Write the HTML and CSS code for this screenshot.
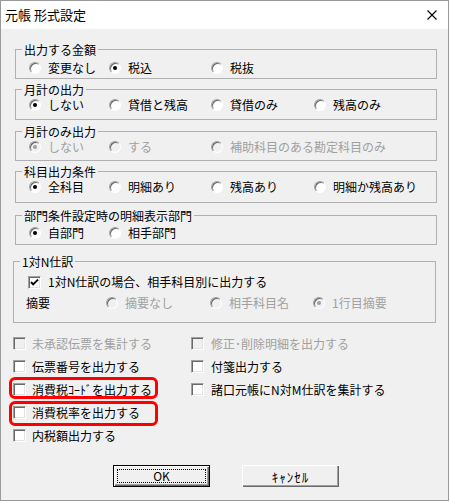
FILE: index.html
```html
<!DOCTYPE html>
<html lang="ja">
<head>
<meta charset="UTF-8">
<link rel="stylesheet" href="styles.css">
</head>
<body>
<div class="window">
	<div class="titlebar">
		<span class="title">元帳 形式設定</span>
		<svg class="close" width="10" height="10" viewBox="0 0 10 10"><path d="M0.5 0.5 L9.5 9.5 M9.5 0.5 L0.5 9.5" stroke="#000" stroke-width="1.1" fill="none"/></svg>
	</div>
	<div class="content">
		<fieldset class="group g1">
			<legend>出力する金額</legend>
			<div class="opts">
				<label class="opt"><span class="radio"></span>変更なし</label>
				<label class="opt"><span class="radio on"></span>税込</label>
				<label class="opt"><span class="radio"></span>税抜</label>
			</div>
		</fieldset>
		<fieldset class="group g2">
			<legend>月計の出力</legend>
			<div class="opts">
				<label class="opt"><span class="radio on"></span>しない</label>
				<label class="opt"><span class="radio"></span>貸借と残高</label>
				<label class="opt"><span class="radio"></span>貸借のみ</label>
				<label class="opt"><span class="radio"></span>残高のみ</label>
			</div>
		</fieldset>
		<fieldset class="group g3">
			<legend>月計のみ出力</legend>
			<div class="opts">
				<label class="opt off"><span class="radio on"></span>しない</label>
				<label class="opt off"><span class="radio"></span>する</label>
				<label class="opt off wide"><span class="radio"></span>補助科目のある勘定科目のみ</label>
			</div>
		</fieldset>
		<fieldset class="group g4">
			<legend>科目出力条件</legend>
			<div class="opts">
				<label class="opt"><span class="radio on"></span>全科目</label>
				<label class="opt"><span class="radio"></span>明細あり</label>
				<label class="opt"><span class="radio"></span>残高あり</label>
				<label class="opt"><span class="radio"></span>明細か残高あり</label>
			</div>
		</fieldset>
		<fieldset class="group g5">
			<legend>部門条件設定時の明細表示部門</legend>
			<div class="opts">
				<label class="opt"><span class="radio on"></span>自部門</label>
				<label class="opt"><span class="radio"></span>相手部門</label>
			</div>
		</fieldset>
		<fieldset class="group g6">
			<legend>1対N仕訳</legend>
			<div class="opts">
				<label class="opt full"><span class="box ticked"><svg width="11" height="11" viewBox="0 0 11 11"><path d="M2 5 L4.2 7.4 L9 2.6" stroke="#000" stroke-width="2" fill="none"/></svg></span>1対N仕訳の場合、相手科目別に出力する</label>
			</div>
			<div class="opts second">
				<span class="opt">摘要</span>
				<label class="opt off"><span class="radio"></span>摘要なし</label>
				<label class="opt off"><span class="radio"></span>相手科目名</label>
				<label class="opt off"><span class="radio on"></span>1行目摘要</label>
			</div>
		</fieldset>

		<div class="checks">
			<label class="check off"><span class="box"></span>未承認伝票を集計する</label>
			<label class="check off"><span class="box"></span>修正･削除明細を出力する</label>
			<label class="check"><span class="box"></span>伝票番号を出力する</label>
			<label class="check"><span class="box"></span>付箋出力する</label>
			<label class="check mark mark-a"><span class="box"></span>消費税ｺｰﾄﾞを出力する</label>
			<label class="check"><span class="box"></span>諸口元帳にN対M仕訳を集計する</label>
			<label class="check mark mark-b"><span class="box"></span>消費税率を出力する</label>
			<span></span>
			<label class="check"><span class="box"></span>内税額出力する</label>
		</div>

		<div class="buttons">
			<button class="btn default"><span class="focus">OK</span></button>
			<button class="btn"><span class="cap">ｷｬﾝｾﾙ</span></button>
		</div>
	</div>
</div>
</body>
</html>
```

FILE: styles.css
```css
*{ margin:0; padding:0; box-sizing:border-box;}
body{ background:#fff; font-family:"Noto Sans CJK JP","Noto Sans",sans-serif; font-size:12px; color:#000;}

.window{ width:449px; height:501px; border:1px solid #9a9a9a; background:#f0f0f0;}
.titlebar{ height:28px; background:#fff; display:flex; align-items:center; justify-content:space-between; padding:0 11px 0 4px;}
.title{ font-size:13px; line-height:16px;}
.close{ display:block;}

.content{ padding:13px 11px 0 14px;}

/* group boxes */
.group{ border:1px solid #b0b0b0; padding:0 0 0 6px; min-width:0;}
.group legend{ padding:0 2px; line-height:15px;}
.opts{ display:grid; grid-template-columns:80px 102px 103px auto; padding-left:7px; line-height:14px;}
.opt{ display:flex; align-items:center; gap:7px; white-space:nowrap;}
.opt.full{ grid-column:1 / -1; gap:7px; padding-left:1px;}
.opt.wide{ grid-column:3 / 5;}
.off{ color:#a0a0a0;}

.g1{ padding-top:4px; padding-bottom:3px;}
.g2{ margin-top:3px; padding-top:1px; padding-bottom:7px;}
.g3{ margin-top:4px; padding-top:1px; padding-bottom:6px;}
.g4{ margin-top:3px; padding-top:1px; padding-bottom:8px;}
.g5{ margin-top:5px; padding-top:3px; padding-bottom:4px;}
.g6{ margin:9px 1px 0 -2px; padding-top:6px; padding-bottom:12px;}
.g6 .opts{ padding-left:7px;}
.g6 .second{ margin-top:7px; grid-template-columns:80px 104px 103px auto; padding-left:6px;}

/* radio */
.radio{ position:relative; flex:none; width:12px; height:12px; border-radius:50%; background:#fff; border:1px solid; border-color:#a0a0a0 #fff #fff #a0a0a0; box-shadow:inset 1px 1px 0 #696969;}
.radio.on::after{ content:""; position:absolute; left:3px; top:3px; width:4px; height:4px; border-radius:50%; background:#000;}
.off .radio{ background:#f0f0f0;}
.off .radio.on::after{ background:#a0a0a0;}

/* checkbox */
.box{ flex:none; width:13px; height:13px; background:#fff; border:1px solid; border-color:#a0a0a0 #fff #fff #a0a0a0; box-shadow:inset 1px 1px 0 #696969, inset -1px -1px 0 #e3e3e3;}
.box svg{ display:block;}
.off .box{ background:#f0f0f0;}

.checks{ display:grid; grid-template-columns:178px 1fr; grid-auto-rows:23px; margin:9px 0 0 -2px; line-height:16px;}
.check{ position:relative; display:flex; align-items:center; gap:6px; white-space:nowrap;}
.check:nth-child(even){ gap:7px;}

/* red marks */
.mark::after{ content:""; position:absolute; left:-4px; right:33px; border:3px solid #f00; border-radius:6px;}
.mark-a::after{ top:-1px; bottom:2px;}
.mark-b::after{ top:0; bottom:-2px;}

/* buttons */
.buttons{ display:flex; gap:32px; margin:18px 0 0 98px;}
.btn{ width:97px; height:22px; background:#f0f0f0; border:none; font:inherit; font-size:12px; color:#000; box-shadow:inset 1px 1px 0 #fff, inset -1px -1px 0 #696969, inset -2px -2px 0 #a0a0a0;}
.btn.default{ border:1px solid #000; padding:3px;}
.btn .focus{ display:block; height:100%; border:1px dotted #000; line-height:12px;}
.btn .cap{ font-size:13px; letter-spacing:1px;}
```
